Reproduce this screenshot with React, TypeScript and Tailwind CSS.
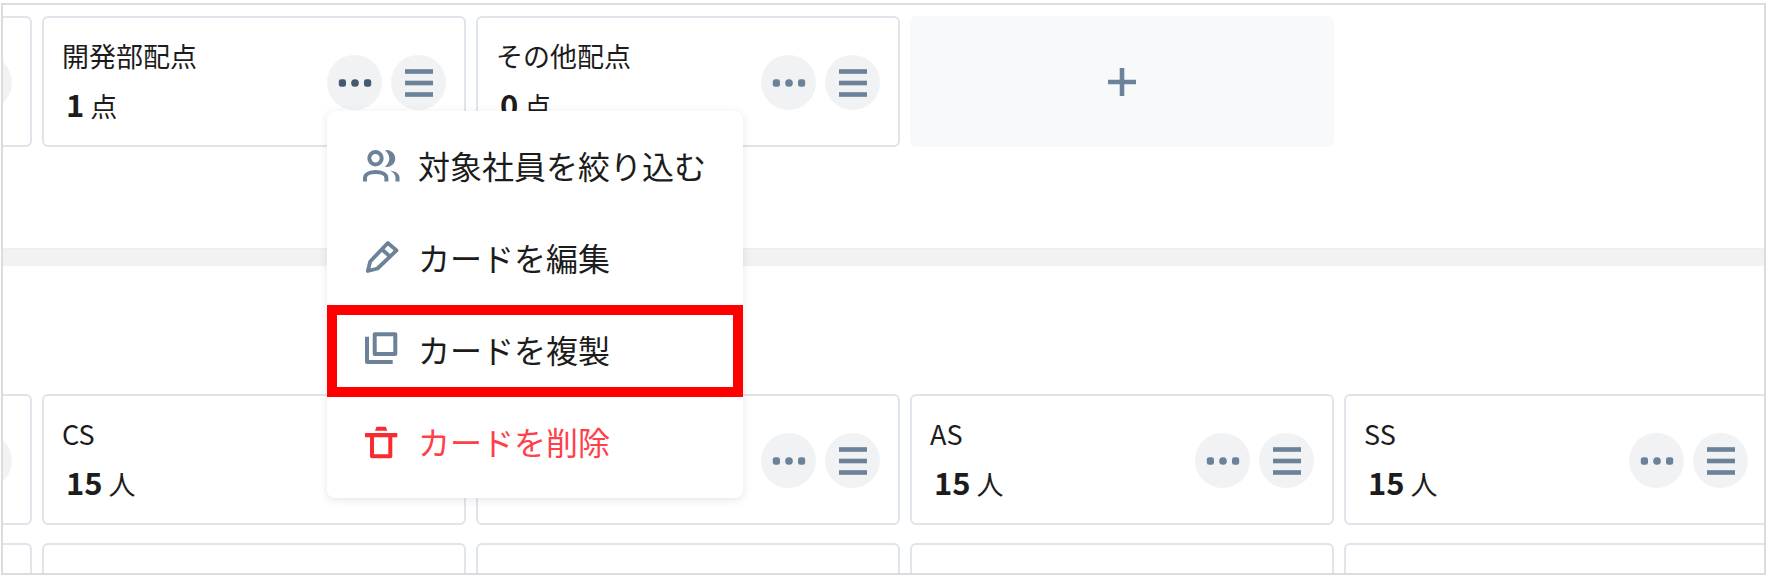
import React, { useState } from 'react';
import clsx from 'clsx';

interface CardData {
  id: string;
  title?: string;
  value?: number;
  unit?: string;
  blank?: boolean;
}

const scoreCards: CardData[] = [
  { id: 'score-0' },
  { id: 'score-1', title: '開発部配点', value: 1, unit: '点' },
  { id: 'score-2', title: 'その他配点', value: 0, unit: '点' },
];

const memberCards: CardData[] = [
  { id: 'member-0' },
  { id: 'member-1', title: 'CS', value: 15, unit: '人' },
  { id: 'member-2' },
  { id: 'member-3', title: 'AS', value: 15, unit: '人' },
  { id: 'member-4', title: 'SS', value: 15, unit: '人' },
];

const emptyCards: CardData[] = [0, 1, 2, 3, 4].map((n) => ({ id: `empty-${n}`, blank: true }));

/* ---------- Icons ---------- */

const DotsIcon = () => (
  <svg width="34" height="10" viewBox="0 0 34 10" fill="currentColor" aria-hidden="true">
    <rect x="0.8" y="1.2" width="7.2" height="7.6" rx="2.4" />
    <rect x="13.2" y="1.2" width="7.6" height="7.6" rx="3.6" />
    <rect x="26" y="1.2" width="7.2" height="7.6" rx="2.4" />
  </svg>
);

const BarsIcon = () => (
  <svg width="28" height="28" viewBox="0 0 28 28" fill="currentColor" aria-hidden="true">
    <rect y="0.2" width="28" height="4.6" />
    <rect y="11.7" width="28" height="4.6" />
    <rect y="23.2" width="28" height="4.6" />
  </svg>
);

const PlusIcon = () => (
  <svg width="28" height="28" viewBox="0 0 28 28" fill="currentColor" aria-hidden="true">
    <path d="M11.7 0h4.6v11.7H28v4.6H16.3V28h-4.6V16.3H0v-4.6h11.7z" />
  </svg>
);

const UsersIcon = () => (
  <svg width="40" height="40" viewBox="0 0 40 40" fill="none" aria-hidden="true">
    <circle cx="14.5" cy="11.3" r="6.2" stroke="currentColor" strokeWidth="4" />
    <path d="M4 34.5v-3.6c0-4 5.2-5.9 10.7-5.9s10.7 1.9 10.7 5.9v3.6" stroke="currentColor" strokeWidth="4" />
    <path d="M24 3.3a8.4 8.4 0 1 1 0 16.4c5.8-5 5.8-11.4 0-16.4z" fill="currentColor" />
    <path d="M29 23.5c6 .9 9.5 3.2 9.5 7.2v3.8h-4v-3.8c0-3-2-5.2-5.5-7.2z" fill="currentColor" />
  </svg>
);

const PencilIcon = () => (
  <svg width="40" height="40" viewBox="0 0 40 40" fill="none" stroke="currentColor" strokeWidth="3.8" aria-hidden="true">
    <path d="M6.8 32l2.4-9.5L26.8 4l8.7 7.4L16.5 29.5z" strokeLinejoin="round" />
    <path d="M20.5 10l9 8" />
  </svg>
);

const CopyIcon = () => (
  <svg width="40" height="40" viewBox="0 0 40 40" fill="none" stroke="currentColor" strokeWidth="4" strokeLinejoin="round" aria-hidden="true">
    <rect x="13.7" y="3.3" width="20.6" height="19.7" />
    <path d="M6 5.7V31h25.7" />
  </svg>
);

const TrashIcon = () => (
  <svg width="40" height="40" viewBox="0 0 40 40" fill="none" aria-hidden="true">
    <path d="M15.5 3.7h9.3l1.5 4H14z" fill="currentColor" />
    <path d="M4 12.2h32.3" stroke="currentColor" strokeWidth="4.2" />
    <path d="M11 12v21.3h18.3V12" stroke="currentColor" strokeWidth="4" strokeLinejoin="round" />
  </svg>
);

/* ---------- Menu ---------- */

const menuItems = [
  { id: 'filter', label: '対象社員を絞り込む', Icon: UsersIcon },
  { id: 'edit', label: 'カードを編集', Icon: PencilIcon },
  { id: 'duplicate', label: 'カードを複製', Icon: CopyIcon, highlighted: true },
  { id: 'delete', label: 'カードを削除', Icon: TrashIcon, danger: true },
];

const CardMenu: React.FC = () => (
  <div
    role="menu"
    className="absolute left-0 top-14 z-10 w-[416px] rounded-lg bg-white pt-[10px] pb-[9px] shadow-[0_2px_10px_rgba(0,0,0,0.1)]"
  >
    {menuItems.map(({ id, label, Icon, highlighted, danger }) => (
      <button
        key={id}
        type="button"
        role="menuitem"
        className={clsx(
          'flex h-[92px] w-full items-center gap-[17px] text-left text-[32px] leading-10 whitespace-nowrap',
          highlighted ? 'border-[10px] border-[#ff0000] px-6' : 'px-[34px]',
          danger ? 'text-[#ff4048]' : 'text-[#1c1c1c]'
        )}
      >
        <span className={clsx('shrink-0', danger ? 'text-[#f92a30]' : 'text-[#6b8299]')}>
          <Icon />
        </span>
        <span className="pb-1">{label}</span>
      </button>
    ))}
  </div>
);

/* ---------- Cards ---------- */

interface CardProps {
  card: CardData;
  menuOpen: boolean;
  onToggleMenu: () => void;
}

const Card: React.FC<CardProps> = ({ card, menuOpen, onToggleMenu }) => (
  <div className="flex h-[131px] w-[424px] shrink-0 items-start justify-between rounded-md border-2 border-[#dfe5ea] bg-white px-[18px]">
    {!card.blank && (
      <>
        <div className="pt-5 text-[27px] leading-9 text-[#1c1c1c]">
          {card.title && (
            <>
              <p>{card.title}</p>
              <p className="mt-3 flex items-baseline gap-1.5 pl-1">
                <span className="text-[31px] font-bold">{card.value}</span>
                <span>{card.unit}</span>
              </p>
            </>
          )}
        </div>
        <div className="relative mt-[37px] flex gap-[9px] text-[#6b8299]">
          <button
            type="button"
            aria-label="メニュー"
            aria-expanded={menuOpen}
            onClick={onToggleMenu}
            className={clsx(
              'flex size-[55px] items-center justify-center rounded-full bg-[#f0f2f4]',
              menuOpen && 'text-[#435a70]'
            )}
          >
            <DotsIcon />
          </button>
          <button
            type="button"
            aria-label="並び替え"
            className="flex size-[55px] items-center justify-center rounded-full bg-[#f0f2f4]"
          >
            <BarsIcon />
          </button>
          {menuOpen && <CardMenu />}
        </div>
      </>
    )}
  </div>
);

const App: React.FC = () => {
  const [openId, setOpenId] = useState<string | null>('score-1');

  const renderCards = (cards: CardData[]) =>
    cards.map((card) => (
      <Card
        key={card.id}
        card={card}
        menuOpen={openId === card.id}
        onToggleMenu={() => setOpenId(openId === card.id ? null : card.id)}
      />
    ));

  return (
    <div className="h-screen bg-white pt-[3px] pr-[3px] pb-0.5 pl-px font-['Noto_Sans_CJK_JP',sans-serif]">
      <main className="h-full overflow-hidden border-2 border-[#dcdcdc]">
        {/* Score cards, the strip is scrolled past the first one */}
        <section className="-ml-[395px] flex gap-2.5 pt-[11px] pb-[101px]">
          {renderCards(scoreCards)}
          <button
            type="button"
            aria-label="カードを追加"
            className="flex h-[131px] w-[424px] shrink-0 items-center justify-center rounded-md bg-[#f8f9fb] text-[#6b8299]"
          >
            <PlusIcon />
          </button>
        </section>

        <div className="h-[18px] border-t border-[#e9eff3] bg-[#f0f2f4]" />

        {/* Member cards */}
        <section className="-ml-[395px] flex flex-col gap-[18px] pt-32">
          <div className="flex gap-2.5">{renderCards(memberCards)}</div>
          <div className="flex gap-2.5">{renderCards(emptyCards)}</div>
        </section>
      </main>
    </div>
  );
};

export default App;
